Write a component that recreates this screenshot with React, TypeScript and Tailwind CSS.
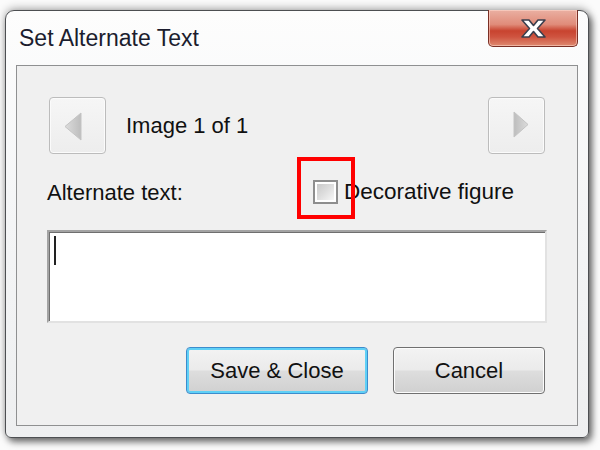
import React from "react";

// Windows 7 style "Set Alternate Text" dialog

function NavButton({ dir }: { dir: "prev" | "next" }) {
  return (
    <button
      type="button"
      className="w-[57px] h-[57px] flex items-center justify-center rounded-[4px] border border-[#bcbcbc] bg-gradient-to-b from-[#f6f6f6] to-[#ededed] shadow-[inset_0_0_0_1px_#fbfbfb]"
    >
      {dir === "prev" ? (
        <svg width="18" height="29" viewBox="0 0 18 29" className="-ml-[10px] mt-[1px]">
          <defs>
            <linearGradient id="tri-l" x1="0" x2="1" y1="0" y2="0">
              <stop offset="0" stopColor="#dcdcdc" />
              <stop offset="1" stopColor="#bdbdbd" />
            </linearGradient>
          </defs>
          <polygon points="17,1 17,28 1,14.5" fill="url(#tri-l)" stroke="#c4c4c4" strokeWidth="1" />
        </svg>
      ) : (
        <svg width="16" height="27" viewBox="0 0 16 27" className="ml-[8px] -mt-[3px]">
          <defs>
            <linearGradient id="tri-r" x1="0" x2="1" y1="0" y2="0">
              <stop offset="0" stopColor="#bdbdbd" />
              <stop offset="1" stopColor="#dcdcdc" />
            </linearGradient>
          </defs>
          <polygon points="1,1 1,26 15,13.5" fill="url(#tri-r)" stroke="#c4c4c4" strokeWidth="1" />
        </svg>
      )}
    </button>
  );
}

function CloseButton() {
  return (
    <div className="mr-[10px] -mt-px self-start w-[90px] h-[37px] rounded-b-[5px] border border-[#7a2f25] border-t-0 bg-[linear-gradient(to_bottom,#eab0a2_0%,#e08c7a_40%,#c8432f_58%,#cf5440_75%,#df8a70_100%)] shadow-[inset_0_0_0_1px_rgba(255,220,210,0.55)] flex items-center justify-center">
      <svg width="27" height="21" viewBox="0 0 27 21" className="mt-[1px]">
        <path
          d="M2 2 H9 L13.5 7.5 L18 2 H25 L17.5 10.5 L25 19 H18 L13.5 13.5 L9 19 H2 L9.5 10.5 Z"
          fill="#ffffff"
          stroke="#3b3f4e"
          strokeWidth="1.6"
          strokeLinejoin="round"
        />
      </svg>
    </div>
  );
}

function PushButton({ label, isDefault, width }: { label: string; isDefault?: boolean; width: string }) {
  return (
    <button
      type="button"
      className={`${width} h-[47px] rounded-[4px] border text-[22px] text-[#111] ${
        isDefault
          ? "border-[#3c8ccd] shadow-[inset_0_0_0_2px_#5fd0f6]"
          : "border-[#707070] shadow-[inset_0_0_0_1px_#fcfcfc]"
      } bg-[linear-gradient(to_bottom,#f3f3f3_0%,#ebebeb_48%,#dddddd_52%,#d0d0d0_100%)]`}
    >
      {label}
    </button>
  );
}

export default function App() {
  return (
    <div className="w-[600px] h-[450px] overflow-hidden bg-[#fbfbfb] pt-[10px] pl-[5px] font-['Liberation_Sans',Arial,sans-serif]">
      <div className="w-[584px] h-[428px] rounded-t-[9px] rounded-b-[6px] border border-[#4d4f52] bg-gradient-to-b from-[#fdfdfd] via-[#f4f5f6] to-[#eeeff0] shadow-[3px_4px_7px_rgba(0,0,0,0.55),0_-2px_9px_rgba(0,0,0,0.28)] flex flex-col">
        {/* title bar */}
        <div className="h-[54px] flex items-center justify-between shrink-0">
          <span className="pl-[13px] text-[23px] text-[#1b1d2e] leading-none">Set Alternate Text</span>
          <CloseButton />
        </div>

        {/* client area */}
        <div className="mx-[10px] h-[361px] border border-[#8f9091] bg-[#f0f0f0] flex flex-col text-[22px] text-[#111]">
          <div className="mt-[31px] px-[32px] flex items-center h-[57px]">
            <NavButton dir="prev" />
            <span className="ml-[20px] flex-1">Image 1 of 1</span>
            <NavButton dir="next" />
          </div>

          <div className="mt-[7px] h-[62px] flex items-center pl-[30px]">
            <span className="w-[266px]">Alternate text:</span>
            <div className="relative flex items-center">
              <span className="w-[25px] h-[24px] border-2 border-[#8e8e8e] bg-white p-[2px] flex">
                <span className="flex-1 bg-gradient-to-br from-[#c9c9c9] via-[#dedede] to-[#f7f7f7]" />
              </span>
              <span className="ml-[6px] text-[22.5px]">Decorative figure</span>
              <span className="absolute left-[-16px] top-[-18px] w-[58px] h-[62px] border-[4px] border-[#ff0000]" />
            </div>
          </div>

          <div className="mt-[7px] mx-[30px] h-[93px] bg-white border-2 border-t-[#a3a3a3] border-l-[#a3a3a3] border-r-[#e2e2e2] border-b-[#e2e2e2] shadow-[inset_1px_1px_0_#6f6f6f] pl-[5px] pt-[4px]">
            <span className="block w-[2px] h-[29px] bg-[#222]" />
          </div>

          <div className="mt-[24px] px-[32px] flex justify-end gap-[25px]">
            <PushButton label="Save & Close" isDefault width="w-[182px]" />
            <PushButton label="Cancel" width="w-[152px]" />
          </div>
        </div>
      </div>
    </div>
  );
}
